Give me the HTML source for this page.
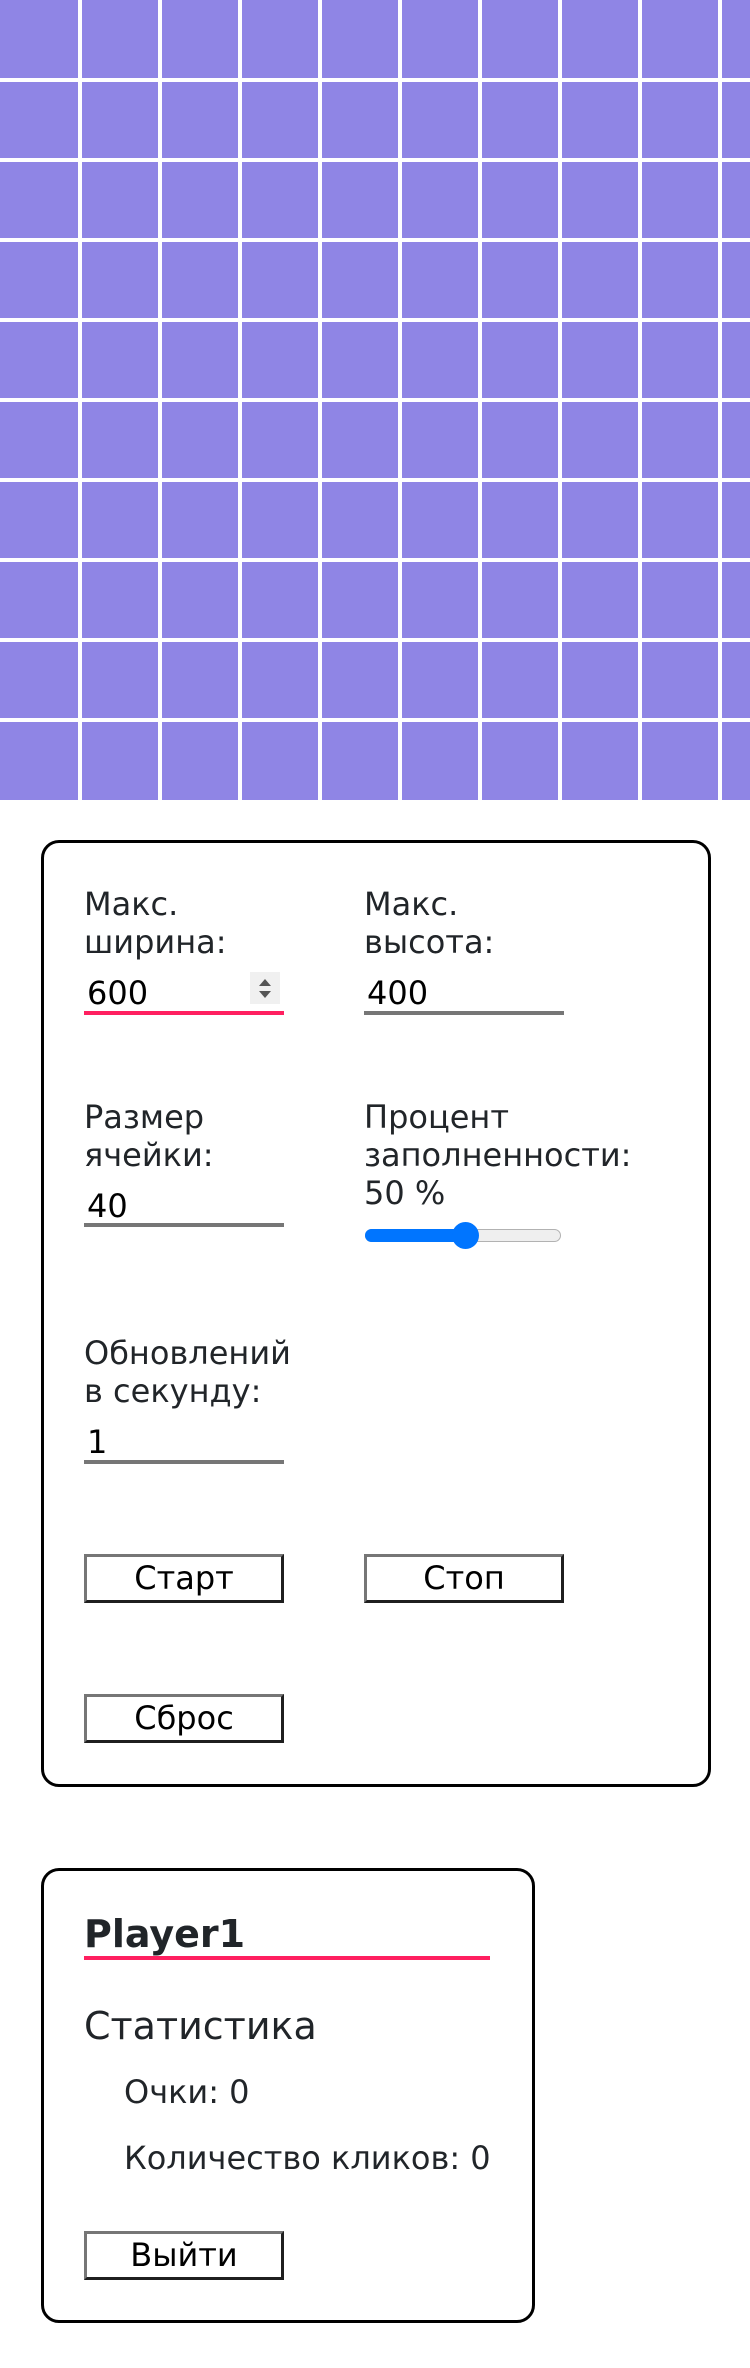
<!DOCTYPE html>
<html><head><meta charset="utf-8"><style>
*{margin:0;padding:0;box-sizing:border-box}
body{width:750px;height:2368px;background:#fff;position:relative;overflow:hidden;font-family:"DejaVu Sans","Liberation Sans",sans-serif;color:#212529}
.grid{position:absolute;left:0;top:0;width:750px;height:800px;background:#8f85e5}
.v{position:absolute;top:0;width:4px;height:800px;background:#fff}
.h{position:absolute;left:0;height:4px;width:750px;background:#fff}
.card{position:absolute;border:3px solid #000;border-radius:18px}
.t{position:absolute;font-size:32px;line-height:38px;white-space:nowrap}
.val{color:#000}
.ul{position:absolute;height:4px;background:#767676}
.btn{position:absolute;width:200px;height:49px;border:3px solid;border-color:#767676 #1f1f1f #1f1f1f #767676;font-size:32px;line-height:42px;text-align:center;color:#000;background:#fff}
</style></head><body>
<div class="grid">
<div class="v" style="left:78px"></div><div class="v" style="left:158px"></div><div class="v" style="left:238px"></div><div class="v" style="left:318px"></div><div class="v" style="left:398px"></div><div class="v" style="left:478px"></div><div class="v" style="left:558px"></div><div class="v" style="left:638px"></div><div class="v" style="left:718px"></div>
<div class="h" style="top:78px"></div><div class="h" style="top:158px"></div><div class="h" style="top:238px"></div><div class="h" style="top:318px"></div><div class="h" style="top:398px"></div><div class="h" style="top:478px"></div><div class="h" style="top:558px"></div><div class="h" style="top:638px"></div><div class="h" style="top:718px"></div>
</div>

<div class="card" style="left:41px;top:840px;width:670px;height:947px"></div>
<div class="t" style="left:84px;top:885px">Макс.</div>
<div class="t" style="left:84px;top:923px">ширина:</div>
<div class="t val" style="left:87px;top:974px">600</div>
<div style="position:absolute;left:250px;top:972px;width:30px;height:32px;background:#f0f0f0"></div>
<div style="position:absolute;left:259px;top:979px;width:0;height:0;border-left:6px solid transparent;border-right:6px solid transparent;border-bottom:7px solid #555"></div>
<div style="position:absolute;left:259px;top:991px;width:0;height:0;border-left:6px solid transparent;border-right:6px solid transparent;border-top:7px solid #555"></div>
<div class="ul" style="left:84px;top:1011px;width:200px;background:#ff2060"></div>

<div class="t" style="left:364px;top:885px">Макс.</div>
<div class="t" style="left:364px;top:923px">высота:</div>
<div class="t val" style="left:367px;top:974px">400</div>
<div class="ul" style="left:364px;top:1011px;width:200px"></div>

<div class="t" style="left:84px;top:1098px">Размер</div>
<div class="t" style="left:84px;top:1136px">ячейки:</div>
<div class="t val" style="left:87px;top:1187px">40</div>
<div class="ul" style="left:84px;top:1223px;width:200px"></div>

<div class="t" style="left:364px;top:1098px">Процент</div>
<div class="t" style="left:364px;top:1136px">заполненности:</div>
<div class="t" style="left:364px;top:1174px">50 %</div>
<div style="position:absolute;left:365px;top:1229px;width:196px;height:13px;border:1px solid #b2b2b2;border-radius:7px;background:#efefef"></div>
<div style="position:absolute;left:365px;top:1229px;width:102px;height:13px;border-radius:7px 0 0 7px;background:#0075ff"></div>
<div style="position:absolute;left:452px;top:1222px;width:27px;height:27px;border-radius:50%;background:#0075ff"></div>

<div class="t" style="left:84px;top:1334px">Обновлений</div>
<div class="t" style="left:84px;top:1372px">в секунду:</div>
<div class="t val" style="left:87px;top:1423px">1</div>
<div class="ul" style="left:84px;top:1460px;width:200px"></div>

<div class="btn" style="left:84px;top:1554px">Старт</div>
<div class="btn" style="left:364px;top:1554px">Стоп</div>
<div class="btn" style="left:84px;top:1694px">Сброс</div>

<div class="card" style="left:41px;top:1868px;width:494px;height:455px"></div>
<div class="t" style="left:84px;top:1911px;font-size:38px;line-height:46px;font-weight:bold">Player1</div>
<div class="ul" style="left:84px;top:1956px;width:406px;background:#ff2060"></div>
<div class="t" style="left:84px;top:2002px;font-size:38px;line-height:48px">Статистика</div>
<div class="t" style="left:124px;top:2073px">Очки: 0</div>
<div class="t" style="left:124px;top:2139px">Количество кликов: 0</div>
<div class="btn" style="left:84px;top:2231px">Выйти</div>
</body></html>
